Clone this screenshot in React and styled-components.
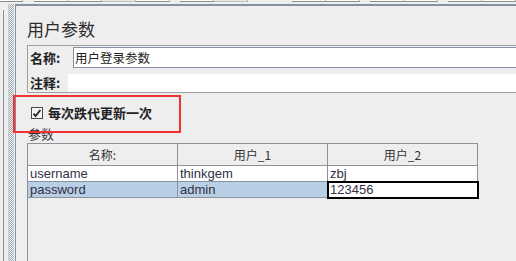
import React from 'react'
import styled, { createGlobalStyle } from 'styled-components'

const CJK = `"Noto Sans CJK SC", "Liberation Sans", sans-serif`
const LINE = '#8591a1'
const GRID = '#8a929c'

const GlobalStyle = createGlobalStyle`
  *, *::before, *::after { box-sizing: border-box; }
  html, body { margin: 0; padding: 0; background: #eeeeee; }
  body { font-family: "Liberation Sans", Arial, sans-serif; }
`

const Screen = styled.div`
  position: relative;
  width: 516px;
  height: 261px;
  overflow: hidden;
  background: #eeeeee;
  display: flex;
  flex-direction: column;
`

const ToolStrip = styled.div`
  height: 4px;
  flex-shrink: 0;
  display: flex;
`

const StripButton = styled.div`
  height: 2px;
  width: ${({ w }) => w}px;
  margin-right: ${({ gap }) => gap || 0}px;
  background: ${({ light }) => (light ? '#e6e6e6' : '#fbfbfb')};
  border-bottom: 1px solid ${({ light }) => (light ? '#c4c4c4' : '#8e8e8e')};
  border-right: 1px solid #b4b4b4;
`

const Body = styled.div`
  flex: 1;
  min-height: 0;
  display: flex;
`

const Rail = styled.div`
  width: 15px;
  flex-shrink: 0;
  display: flex;
`

const RailLine = styled.div`
  width: 1px;
  margin: 6px 0 0 3px;
  background: #8e8e8e;
`

const Grip = styled.div`
  width: 6px;
  margin-left: 4px;
  background: repeating-conic-gradient(#a6aeb8 0 25%, transparent 0 50%) 0 0 / 2px 2px;
`

const Main = styled.main`
  flex: 1;
  min-width: 0;
  display: flex;
  flex-direction: column;
  border-top: 2px solid ${LINE};
  border-left: 1px solid ${LINE};
  padding-left: 11px;
`

const Title = styled.h1`
  margin: 12px 0 0;
  font: normal 17px/21px ${CJK};
  color: #2b2b2b;
`

const FieldPanel = styled.section`
  margin: 6px -12px 0 0;
  border: 1px solid #a0a0a0;
  padding: 1px 0 0 2px;
  display: flex;
  flex-direction: column;
  gap: 6px;
`

const FieldRow = styled.div`
  display: flex;
  align-items: center;
`

const FieldLabel = styled.label`
  width: ${({ w }) => w}px;
  flex-shrink: 0;
  font: bold 13px/16px ${CJK};
  color: #222;
`

const TextField = styled.div`
  flex: 1;
  height: 21px;
  border: 1px solid ${LINE};
  background: #ffffff;
  padding-left: 1px;
  display: flex;
  align-items: center;
  font: normal 12.5px/16px ${CJK};
  color: #222;
`

const NoteField = styled.div`
  flex: 1;
  height: 18px;
  background: #ffffff;
`

const CheckRow = styled.label`
  margin-top: 10px;
  height: 20px;
  padding-left: 4px;
  display: flex;
  align-items: center;
  gap: 5px;
  font: bold 13px/20px ${CJK};
  color: #222;
`

const SectionLabel = styled.div`
  margin: 3px 0 0 1px;
  font: normal 13px/15px ${CJK};
  color: #333;
`

const TableViewport = styled.div`
  flex: 1;
  margin: 2px -12px 0 0;
  border-left: 1px solid ${LINE};
  display: flex;
  flex-direction: column;
`

const GridRow = styled.div`
  display: flex;
`

const HeadCell = styled.div`
  width: 150px;
  height: 23px;
  border-top: 1px solid ${GRID};
  border-right: 1px solid ${GRID};
  border-bottom: 1px solid ${GRID};
  background: #eeeeee;
  display: flex;
  align-items: center;
  justify-content: center;
  font: normal 12px/16px ${CJK};
  color: #333;
`

const Cell = styled.div`
  position: relative;
  width: 150px;
  height: 16px;
  border-right: 1px solid ${GRID};
  border-bottom: 1px solid ${GRID};
  padding-left: 2px;
  background: ${({ selected, editing }) =>
    editing ? '#ffffff' : selected ? '#b8cfe5' : '#ffffff'};
  outline: ${({ editing }) => (editing ? '2px solid #000' : 'none')};
  outline-offset: -1px;
  z-index: ${({ editing }) => (editing ? 1 : 0)};
  font: normal 13px/15px "Liberation Sans", Arial, sans-serif;
  color: #332f45;
  white-space: nowrap;
`

const Annotation = styled.div`
  position: absolute;
  left: 13px;
  top: 95px;
  width: 168px;
  height: 38px;
  border: 2px solid #f43030;
  pointer-events: none;
`

const stripButtons = [
  { w: 23, gap: 11 },
  { w: 34 },
  { w: 34 },
  { w: 34, light: true },
  { w: 34, gap: 10 },
  { w: 34 },
  { w: 34, light: true, gap: 44 },
  { w: 34 },
  { w: 34, gap: 10 },
  { w: 34 },
  { w: 34, gap: 10 },
  { w: 34 },
  { w: 34 },
]

const columns = ['名称:', '用户_1', '用户_2']

const rows = [
  { id: 'u', values: ['username', 'thinkgem', 'zbj'] },
  { id: 'p', values: ['password', 'admin', '123456'], selected: true, editCol: 2 },
]

function CheckBox() {
  return (
    <svg width="12" height="12" viewBox="0 0 12 12">
      <rect x="0.5" y="0.5" width="11" height="11" fill="#f2f4f8" stroke="#4a4a4a" />
      <path d="M2.6 6.6 L4.6 9 L9.4 3" fill="none" stroke="#222" strokeWidth="1.8" />
    </svg>
  )
}

export default function App() {
  return (
    <>
      <GlobalStyle />
      <Screen>
        <ToolStrip>
          {stripButtons.map((b, i) => (
            <StripButton key={i} w={b.w} gap={b.gap} light={b.light} />
          ))}
        </ToolStrip>
        <Body>
          <Rail>
            <RailLine />
            <Grip />
          </Rail>
          <Main>
            <Title>用户参数</Title>
            <FieldPanel>
              <FieldRow>
                <FieldLabel w={43}>名称:</FieldLabel>
                <TextField>用户登录参数</TextField>
              </FieldRow>
              <FieldRow>
                <FieldLabel w={38}>注释:</FieldLabel>
                <NoteField />
              </FieldRow>
            </FieldPanel>
            <CheckRow>
              <CheckBox />
              每次跌代更新一次
            </CheckRow>
            <SectionLabel>参数</SectionLabel>
            <TableViewport>
              <GridRow>
                {columns.map((c) => (
                  <HeadCell key={c}>{c}</HeadCell>
                ))}
              </GridRow>
              {rows.map((r) => (
                <GridRow key={r.id}>
                  {r.values.map((v, i) => (
                    <Cell key={i} selected={r.selected} editing={r.editCol === i}>
                      {v}
                    </Cell>
                  ))}
                </GridRow>
              ))}
            </TableViewport>
          </Main>
        </Body>
        <Annotation />
      </Screen>
    </>
  )
}
